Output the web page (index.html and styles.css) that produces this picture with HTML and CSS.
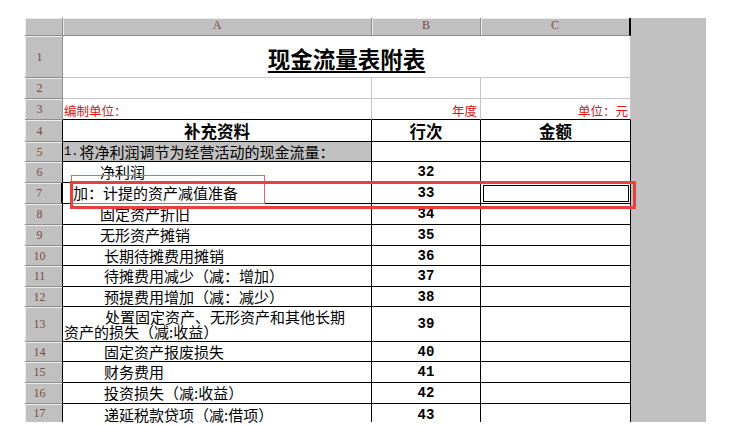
FILE: index.html
```html
<!DOCTYPE html>
<html lang="zh-CN">
<head>
<meta charset="utf-8">
<title>现金流量表附表</title>
<link rel="stylesheet" href="styles.css">
</head>
<body>
<div class="page">
  <div class="sheet">
    <div class="gray"></div>

    <div class="corner"></div>
    <div class="ch">A</div>
    <div class="ch">B</div>
    <div class="ch last">C</div>

    <div class="rh">1</div>
    <div class="c g title"><span class="title-text">现金流量表附表</span></div>

    <div class="rh">2</div>
    <div class="c g"></div>
    <div class="c g"></div>
    <div class="c g"></div>

    <div class="rh">3</div>
    <div class="c g r3 red">编制单位：</div>
    <div class="c g r3 red right">年度</div>
    <div class="c g r3 red right last">单位：元</div>

    <div class="rh t">4</div>
    <div class="c t head">补充资料</div>
    <div class="c t head">行次</div>
    <div class="c t head">金额</div>

    <div class="rh t">5</div>
    <div class="c t shade"><span class="half">1.</span>将净利润调节为经营活动的现金流量：</div>
    <div class="c t"></div>
    <div class="c t"></div>

    <div class="rh t">6</div>
    <div class="c t i1">净利润</div>
    <div class="c t num">32</div>
    <div class="c t"></div>

    <div class="rh t sel">7</div>
    <div class="c t i0">加：计提的资产减值准备</div>
    <div class="c t num">33</div>
    <div class="c t active"></div>

    <div class="rh t">8</div>
    <div class="c t i1">固定资产折旧</div>
    <div class="c t num">34</div>
    <div class="c t"></div>

    <div class="rh t">9</div>
    <div class="c t i1">无形资产摊销</div>
    <div class="c t num">35</div>
    <div class="c t"></div>

    <div class="rh t">10</div>
    <div class="c t i2">长期待摊费用摊销</div>
    <div class="c t num">36</div>
    <div class="c t"></div>

    <div class="rh t">11</div>
    <div class="c t i2">待摊费用减少（减：增加）</div>
    <div class="c t num">37</div>
    <div class="c t"></div>

    <div class="rh t">12</div>
    <div class="c t i2">预提费用增加（减：减少）</div>
    <div class="c t num">38</div>
    <div class="c t"></div>

    <div class="rh t">13</div>
    <div class="c t wrap"><p class="wrap-text">处置固定资产、无形资产和其他长期资产的损失（减:收益）</p></div>
    <div class="c t num">39</div>
    <div class="c t"></div>

    <div class="rh t">14</div>
    <div class="c t i2">固定资产报废损失</div>
    <div class="c t num">40</div>
    <div class="c t"></div>

    <div class="rh t">15</div>
    <div class="c t i2">财务费用</div>
    <div class="c t num">41</div>
    <div class="c t"></div>

    <div class="rh t">16</div>
    <div class="c t i2">投资损失（减:收益）</div>
    <div class="c t num">42</div>
    <div class="c t"></div>

    <div class="rh t end">17</div>
    <div class="c t i2 cut">递延税款贷项（减:借项）</div>
    <div class="c t num cut">43</div>
    <div class="c t cut"></div>
  </div>

  <div class="mark mark-thin"></div>
  <div class="mark mark-thick"></div>
</div>
</body>
</html>
```

FILE: styles.css
```css
* { box-sizing: border-box; }

html, body {
  margin: 0;
  padding: 0;
  background: #fff;
}

body {
  font-family: "Noto Sans CJK SC", "Noto Sans", sans-serif;
  color: #000;
}

.page {
  position: relative;
  width: 729px;
  height: 426px;
  padding: 18px 0 0 25px;
}

.sheet {
  display: grid;
  width: 681px;
  grid-template-columns: 38px 309px 109px 150px 75px;
  grid-template-rows: 18px 42px 21px 21px 22px 20px 21px 21px 21px 21px 20px 21px 20px 35px 20px 21px 21px 18px;
  background: #fff;
}

.gray {
  grid-column: 5;
  grid-row: 1 / -1;
  background: #c0c0c0;
}

/* headers */
.corner, .ch, .rh {
  display: flex;
  align-items: center;
  justify-content: center;
  background: #c0c0c0;
  color: #7e4848;
  font-family: "Liberation Serif", serif;
  font-size: 12px;
  line-height: 12px;
  border-right: 1px solid #8e8e8e;
  border-bottom: 1px solid #8e8e8e;
  box-shadow: inset 1px 1px 0 #ececec;
}

.ch { padding-bottom: 4px; }
.ch.last { border-right: 2px solid #000; }

.rh { padding-right: 8px; }
.rh.t { border-right-color: #000; }
.rh.sel { border-right: 2px solid #000; }
.rh.end { border-bottom: 0; }

/* cells */
.c {
  display: flex;
  align-items: center;
  font-size: 15px;
  line-height: 16px;
  white-space: nowrap;
  overflow: hidden;
  border-right: 1px solid #c6c6c6;
  border-bottom: 1px solid #c6c6c6;
}

.c.t {
  border-right-color: #000;
  border-bottom-color: #000;
}

.title {
  grid-column: 2 / 5;
  justify-content: center;
  padding-top: 2px;
}

.title-text {
  font-size: 22.5px;
  line-height: 24px;
  font-weight: 700;
  text-decoration: underline;
  text-decoration-thickness: 1.5px;
  text-underline-offset: 3px;
}

.r3 {
  align-items: flex-end;
  border-bottom-color: #000;
  font-size: 12.5px;
  line-height: 14px;
  padding-bottom: 1px;
  padding-left: 1px;
}

.red { color: #d81414; }
.right { justify-content: flex-end; padding-right: 3px; }
.right.last { padding-right: 2px; }

.head {
  justify-content: center;
  font-size: 16.5px;
  font-weight: 700;
  line-height: 18px;
}

.shade {
  background: #c0c0c0;
  padding-left: 1px;
}

.half {
  font-family: "Liberation Mono", monospace;
  font-size: 12px;
  margin-right: 1px;
}

.i0 { padding-left: 10px; }
.i1 { padding-left: 37px; }
.i2 { padding-left: 41px; }

.num {
  justify-content: center;
  font-family: "Liberation Mono", monospace;
  font-weight: 700;
  font-size: 14px;
}

.wrap {
  white-space: normal;
  padding-left: 1px;
  padding-right: 14px;
}

.wrap-text {
  margin: 0;
  text-indent: 41px;
  line-height: 15px;
}

.active {
  outline: 1px solid #000;
  outline-offset: -3px;
}

.cut {
  align-items: flex-start;
  padding-top: 3px;
  border-bottom: 0;
  overflow: visible;
}

/* red annotation boxes drawn over the sheet */
.mark {
  position: absolute;
  pointer-events: none;
}

.mark-thin {
  left: 71px;
  top: 175px;
  width: 194px;
  height: 29px;
  border: 1px solid #e06464;
}

.mark-thick {
  left: 70px;
  top: 181px;
  width: 566px;
  height: 28px;
  border: 3px solid #e6403f;
}
```
